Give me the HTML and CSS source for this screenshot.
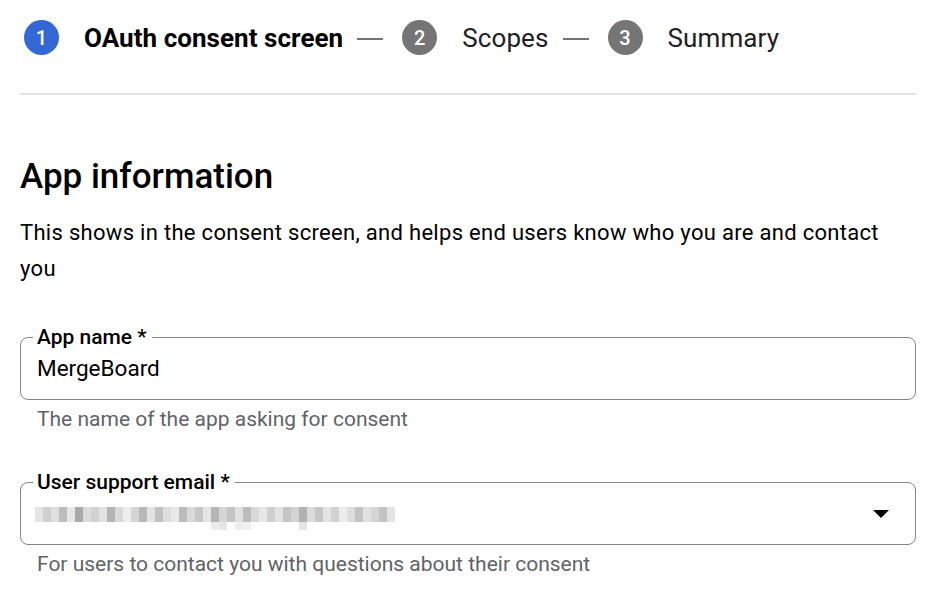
FILE: index.html
```html
<!DOCTYPE html>
<html>
<head>
<meta charset="utf-8">
<link rel="stylesheet" href="styles.css">
</head>
<body>
<div class="page">
  <nav class="stepper">
    <div class="step">
      <span class="num active">1</span>
      <span class="step-label current">OAuth consent screen</span>
    </div>
    <span class="connector"></span>
    <div class="step">
      <span class="num">2</span>
      <span class="step-label">Scopes</span>
    </div>
    <span class="connector"></span>
    <div class="step">
      <span class="num">3</span>
      <span class="step-label">Summary</span>
    </div>
  </nav>
  <hr class="divider">
  <h2 class="section-title">App information</h2>
  <p class="section-desc">This shows in the consent screen, and helps end users know who you are and contact you</p>

  <div class="field">
    <fieldset class="outline">
      <legend class="field-label">App name *</legend>
      <div class="field-value">MergeBoard</div>
    </fieldset>
    <div class="hint">The name of the app asking for consent</div>
  </div>

  <div class="field">
    <fieldset class="outline">
      <legend class="field-label">User support email *</legend>
      <div class="field-value select">
        <svg class="blur" width="360" height="24" viewBox="0 0 360 24">
          <g>
            <rect x="0" y="0" width="8" height="15" fill="#e4e4e4"/>
            <rect x="8" y="0" width="8" height="15" fill="#d0d0d0"/>
            <rect x="16" y="0" width="8" height="15" fill="#e0e0e0"/>
            <rect x="24" y="0" width="8" height="15" fill="#bdbdbd"/>
            <rect x="32" y="0" width="8" height="15" fill="#e6e6e6"/>
            <rect x="40" y="0" width="8" height="15" fill="#a9a9a9"/>
            <rect x="48" y="0" width="8" height="15" fill="#dcdcdc"/>
            <rect x="56" y="0" width="8" height="15" fill="#d2d2d2"/>
            <rect x="64" y="0" width="8" height="15" fill="#e2e2e2"/>
            <rect x="72" y="0" width="8" height="15" fill="#b4b4b4"/>
            <rect x="80" y="0" width="8" height="15" fill="#d9d9d9"/>
            <rect x="88" y="0" width="8" height="15" fill="#eeeeee"/>
            <rect x="96" y="0" width="8" height="15" fill="#d4d4d4"/>
            <rect x="104" y="0" width="8" height="15" fill="#b8b8b8"/>
            <rect x="112" y="0" width="8" height="15" fill="#e3e3e3"/>
            <rect x="120" y="0" width="8" height="15" fill="#c0c0c0"/>
            <rect x="128" y="0" width="8" height="15" fill="#dedede"/>
            <rect x="136" y="0" width="8" height="15" fill="#e8e8e8"/>
            <rect x="144" y="0" width="8" height="15" fill="#bbbbbb"/>
            <rect x="152" y="0" width="8" height="15" fill="#dbdbdb"/>
            <rect x="160" y="0" width="8" height="15" fill="#c8c8c8"/>
            <rect x="168" y="0" width="8" height="15" fill="#e5e5e5"/>
            <rect x="176" y="0" width="8" height="15" fill="#b5b5b5"/>
            <rect x="184" y="0" width="8" height="15" fill="#d6d6d6"/>
            <rect x="192" y="0" width="8" height="15" fill="#c4c4c4"/>
            <rect x="200" y="0" width="8" height="15" fill="#e0e0e0"/>
            <rect x="208" y="0" width="8" height="15" fill="#bcbcbc"/>
            <rect x="216" y="0" width="8" height="15" fill="#d8d8d8"/>
            <rect x="224" y="0" width="8" height="15" fill="#e7e7e7"/>
            <rect x="232" y="0" width="8" height="15" fill="#cfcfcf"/>
            <rect x="240" y="0" width="8" height="15" fill="#e2e2e2"/>
            <rect x="248" y="0" width="8" height="15" fill="#c5c5c5"/>
            <rect x="256" y="0" width="8" height="15" fill="#d3d3d3"/>
            <rect x="264" y="0" width="8" height="15" fill="#b2b2b2"/>
            <rect x="272" y="0" width="8" height="15" fill="#dadada"/>
            <rect x="280" y="0" width="8" height="15" fill="#c6c6c6"/>
            <rect x="288" y="0" width="8" height="15" fill="#e4e4e4"/>
            <rect x="296" y="0" width="8" height="15" fill="#d1d1d1"/>
            <rect x="304" y="0" width="8" height="15" fill="#ececec"/>
            <rect x="312" y="0" width="8" height="15" fill="#dddddd"/>
            <rect x="320" y="0" width="8" height="15" fill="#c3c3c3"/>
            <rect x="328" y="0" width="8" height="15" fill="#e1e1e1"/>
            <rect x="336" y="0" width="8" height="15" fill="#d5d5d5"/>
            <rect x="344" y="0" width="8" height="15" fill="#c2c2c2"/>
            <rect x="352" y="0" width="8" height="15" fill="#e3e3e3"/>
            <rect x="176" y="15" width="8" height="8" fill="#ececec"/>
            <rect x="184" y="15" width="8" height="8" fill="#e6e6e6"/>
            <rect x="200" y="15" width="8" height="8" fill="#ededed"/>
            <rect x="208" y="15" width="8" height="8" fill="#f0f0f0"/>
            <rect x="264" y="15" width="8" height="8" fill="#e6e6e6"/>
          </g>
        </svg>
        <svg class="caret" width="16" height="8" viewBox="0 0 16 8"><path d="M0 0h16L8 8z" fill="#000"/></svg>
      </div>
    </fieldset>
    <div class="hint">For users to contact you with questions about their consent</div>
  </div>
</div>
</body>
</html>
```
FILE: styles.css
```css
* { box-sizing: border-box; }
html, body { margin: 0; padding: 0; background: #fff; }
body {
  font-family: Roboto, "Liberation Sans", Arial, sans-serif;
  color: #202124;
}
.page {
  padding: 20px 20px 0 20px;
}
.stepper {
  display: flex;
  align-items: center;
  height: 35px;
  padding-left: 4px;
}
.step {
  display: flex;
  align-items: center;
}
.num {
  width: 35px;
  height: 35px;
  border-radius: 50%;
  background: #757575;
  color: #fff;
  font-size: 20px;
  font-weight: 500;
  display: flex;
  align-items: center;
  justify-content: center;
}
.num.active { background: #3367d6; }
.step-label {
  margin-left: 25px;
  font-size: 26px;
  color: #202124;
  letter-spacing: 0.1px;
}
.step-label.current {
  font-weight: 700;
  color: #000;
  letter-spacing: 0.05px;
  font-size: 26px;
}
.connector {
  width: 26px;
  height: 2px;
  background: #757575;
  margin: 2px 19px 0 14px;
}
.divider {
  border: 0;
  height: 2px;
  background: #e3e3e3;
  margin: 38px 0 0 0;
}
.section-title {
  font-size: 35px;
  font-weight: 500;
  margin: 60px 0 0 0;
  line-height: 44px;
  color: #000;
  letter-spacing: 0;
}
.section-desc {
  font-size: 22px;
  line-height: 36px;
  margin: 16px 0 0 0;
  color: #000;
  letter-spacing: 0.3px;
  max-width: 880px;
}
.field { margin-top: 38px; }
.field + .field { margin-top: 39px; }
.outline {
  margin: 0;
  border: 1px solid #80868b;
  border-radius: 8px;
  padding: 0 16px 16px 16px;
  min-width: 0;
}
.field-label {
  font-size: 21px;
  font-weight: 500;
  color: #000;
  line-height: 24px;
  padding: 0 5px 0 4px;
  margin-left: -4px;
}
.field-value {
  font-size: 22.5px;
  line-height: 30px;
  color: #000;
  margin-top: 4px;
  height: 30px;
}
.select {
  display: flex;
  align-items: center;
  justify-content: space-between;
}
.blur { display: block; margin-left: -2px; margin-top: 12px; }
.caret { display: block; margin-right: 10px; margin-top: 2px; }
.hint {
  font-size: 21px;
  line-height: 24px;
  color: #5f6368;
  padding-left: 17px;
  margin-top: 7px;
}
```
